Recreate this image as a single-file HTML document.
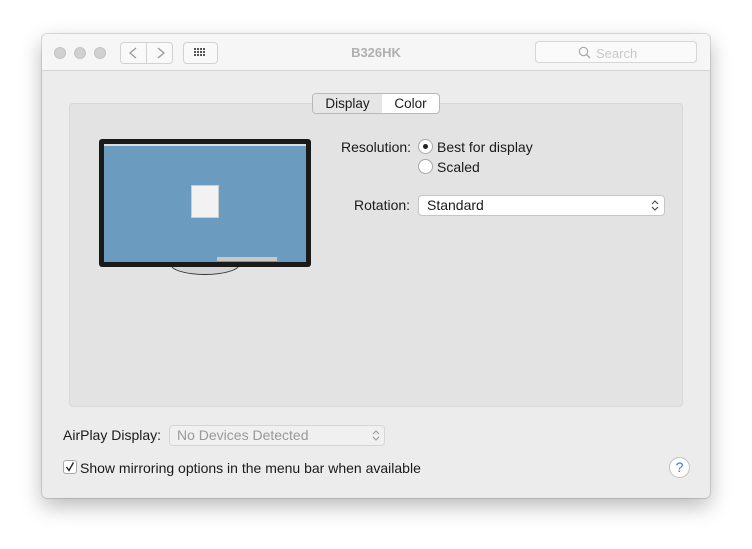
<!DOCTYPE html>
<html><head><style>
*{box-sizing:border-box;margin:0;padding:0}
body{width:752px;height:549px;background:#fff;font-family:"Liberation Sans",sans-serif;position:relative;overflow:hidden;font-size:14px;color:#1a1a1a}
.win{position:absolute;left:42px;top:34px;width:668px;height:464px;background:#ececec;border-radius:5px;box-shadow:0 8px 22px rgba(0,0,0,.28),0 0 0 1px rgba(0,0,0,.12);overflow:hidden}
.tb{position:absolute;left:0;top:0;width:100%;height:37px;background:#f6f6f6;border-bottom:1px solid #d4d4d4}
.dot{position:absolute;top:13px;width:12px;height:12px;border-radius:50%;background:#d0d0d0;border:1px solid #c4c4c4}
.btn{position:absolute;top:8px;height:22px;border:1px solid #d2d2d2;background:#f9f9f9;border-radius:4px}
.abs{position:absolute}
.panel{position:absolute;left:27px;top:69px;width:614px;height:304px;background:#e3e3e3;border:1px solid #d8d8d8;border-radius:4px}
.radio{position:absolute;width:15px;height:15px;border-radius:50%;background:#fff;border:1px solid #a8a8a8}
.sel{position:absolute;background:#fff;border:1px solid #c6c6c6;border-radius:4px;height:21px}
</style></head><body>
<div class="win">
 <div class="tb">
  <div class="dot" style="left:12px"></div><div class="dot" style="left:32px"></div><div class="dot" style="left:52px"></div>
  <div class="btn" style="left:78px;width:27px;border-radius:4px 0 0 4px"></div>
  <div class="btn" style="left:104px;width:27px;border-radius:0 4px 4px 0"></div>
  <svg class="abs" style="left:78px;top:8px" width="54" height="22"><path d="M16 6 L10 11 L16 16" stroke="#999" fill="none" stroke-width="1.3"/><path d="M38 6 L44 11 L38 16" stroke="#999" fill="none" stroke-width="1.3"/></svg>
  <div class="btn" style="left:141px;width:35px"></div>
  <svg class="abs" style="left:152px;top:14px" width="14" height="10"><g fill="#555"><rect x="0" y="0" width="2" height="2"/><rect x="3" y="0" width="2" height="2"/><rect x="6" y="0" width="2" height="2"/><rect x="9" y="0" width="2" height="2"/><rect x="0" y="3" width="2" height="2"/><rect x="3" y="3" width="2" height="2"/><rect x="6" y="3" width="2" height="2"/><rect x="9" y="3" width="2" height="2"/><rect x="0" y="6" width="2" height="2"/><rect x="3" y="6" width="2" height="2"/><rect x="6" y="6" width="2" height="2"/><rect x="9" y="6" width="2" height="2"/></g></svg>
  <div class="abs" style="left:0;width:668px;top:11px;text-align:center;color:#b0b0b0;font-weight:bold;font-size:13px">B326HK</div>
  <div class="abs" style="left:493px;top:7px;width:162px;height:22px;background:#fafafa;border:1px solid #d6d6d6;border-radius:4px"></div>
  <svg class="abs" style="left:536px;top:12px" width="14" height="14"><circle cx="5.5" cy="5.5" r="4.2" stroke="#aaa" fill="none" stroke-width="1.2"/><path d="M8.5 8.5 L12 12" stroke="#aaa" stroke-width="1.3"/></svg>
  <div class="abs" style="left:554px;top:12px;color:#c8c8c8;font-size:13px">Search</div>
 </div>
 <div class="panel"></div>
 <div class="abs" style="left:270px;top:59px;width:128px;height:21px;border:1px solid #b8b8b8;border-radius:4px;background:#fff;overflow:hidden;display:flex;font-size:13.5px">
  <div style="width:69px;background:#e6e6e6;text-align:center;line-height:19px">Display</div>
  <div style="flex:1;text-align:center;line-height:19px">Color</div>
 </div>
 <!-- monitor -->
 <div class="abs" style="left:128px;top:226px;width:70px;height:15px;border:1.5px solid #333;border-top:none;border-radius:0 0 35px 35px/0 0 11px 11px;background:#d4d4d4"></div>
 <div class="abs" style="left:57px;top:105px;width:212px;height:128px;background:#1a1a1a;border-radius:3px"></div>
 <div class="abs" style="left:62px;top:110px;width:202px;height:118px;background:#6b9bbf"></div>
 <div class="abs" style="left:62px;top:110px;width:202px;height:2px;background:#d8dde2"></div>
 <div class="abs" style="left:149px;top:151px;width:28px;height:33px;background:#f2f2f2;border:1px solid #ccc"></div>
 <div class="abs" style="left:175px;top:223px;width:60px;height:4px;background:#c8c8c8"></div>
 <!-- right -->
 <div class="abs" style="left:299px;top:105px">Resolution:</div>
 <div class="radio" style="left:376px;top:105px"><div style="position:absolute;left:4px;top:4px;width:5px;height:5px;border-radius:50%;background:#222"></div></div>
 <div class="abs" style="left:395px;top:105px">Best for display</div>
 <div class="radio" style="left:376px;top:125px"></div>
 <div class="abs" style="left:395px;top:125px">Scaled</div>
 <div class="abs" style="left:312px;top:163px">Rotation:</div>
 <div class="sel" style="left:376px;top:161px;width:247px"></div>
 <div class="abs" style="left:385px;top:163px">Standard</div>
 <svg class="abs" style="left:609px;top:165px" width="8" height="12"><path d="M1 5 L4 2 L7 5 M1 8 L4 11 L7 8" stroke="#444" fill="none" stroke-width="1.1"/></svg>
 <!-- bottom -->
 <div class="abs" style="left:21px;top:393px">AirPlay Display:</div>
 <div class="sel" style="left:127px;top:391px;width:216px;background:#f0f0f0;border-color:#d6d6d6"></div>
 <div class="abs" style="left:135px;top:393px;color:#999">No Devices Detected</div>
 <svg class="abs" style="left:330px;top:395px" width="8" height="12"><path d="M1 5 L4 2 L7 5 M1 8 L4 11 L7 8" stroke="#999" fill="none" stroke-width="1.1"/></svg>
 <div class="abs" style="left:21px;top:426px;width:14px;height:14px;background:#fff;border:1px solid #a8a8a8;border-radius:3px"></div>
 <svg class="abs" style="left:22px;top:427px" width="12" height="12"><path d="M2.5 6 L5 9.5 L9.5 1.5" stroke="#222" fill="none" stroke-width="1.4"/></svg>
 <div class="abs" style="left:38px;top:426px">Show mirroring options in the menu bar when available</div>
 <div class="abs" style="left:627px;top:423px;width:21px;height:21px;border-radius:50%;background:#fff;border:1px solid #c0c0c0;color:#2a7de1;text-align:center;line-height:19px;font-size:14px">?</div>
</div>
</body></html>
